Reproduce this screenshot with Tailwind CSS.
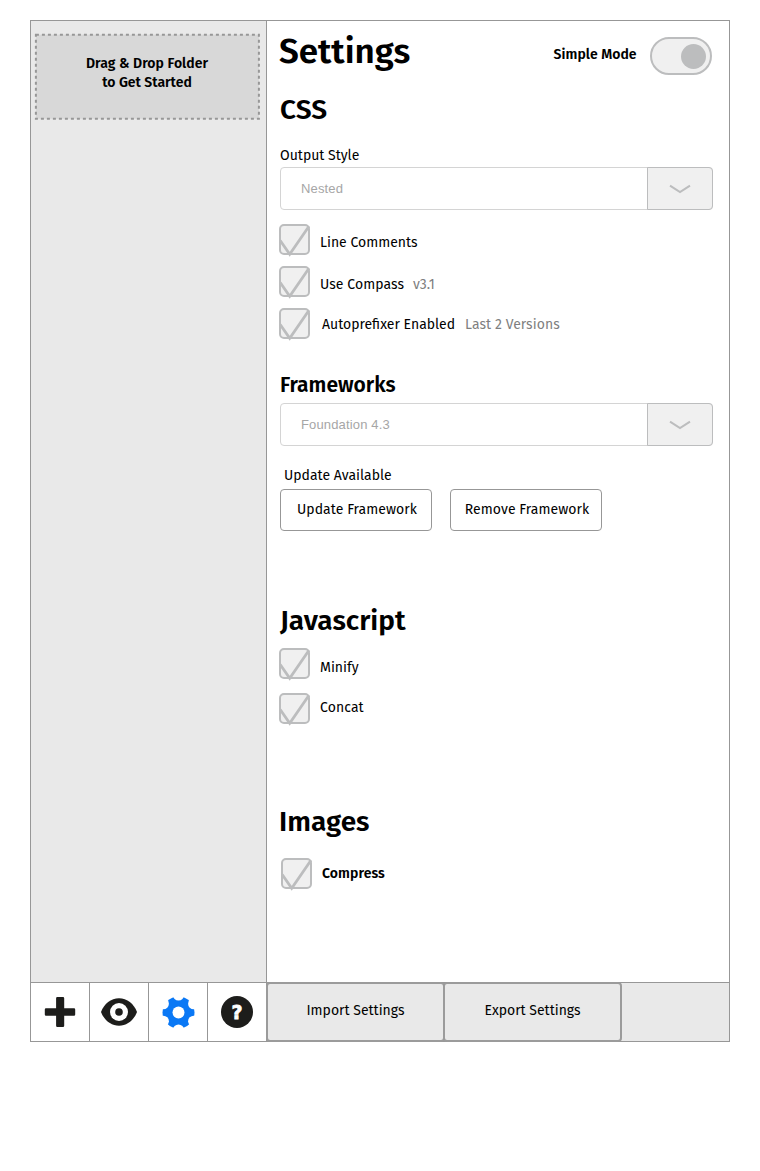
<!DOCTYPE html>
<html lang="en">
<head>
<meta charset="utf-8">
<title>Settings</title>
<script src="https://cdn.jsdelivr.net/npm/@tailwindcss/browser@4"></script>
</head>
<body class="bg-white text-black font-['Fira_Sans','Noto_Sans',sans-serif] text-[14px] leading-5">
<svg class="hidden">
  <symbol id="check" viewBox="0 0 32 33"><rect x="1" y="1" width="29" height="29" rx="4" fill="#f0f0f0" stroke="#bcbdbe" stroke-width="2"/><path d="M1.2 16.5 10.7 30.2 30 2.2" fill="none" stroke="#bcbdbe" stroke-width="2.8"/></symbol>
  <symbol id="chev" viewBox="0 0 22 10"><path d="M1 1.7 11 8.1 21 1.7" fill="none" stroke="#bcbdbe" stroke-width="2"/></symbol>
</svg>
<div class="ml-[30px] mt-5 w-[700px] h-[1022px] border border-[#979797] flex flex-col whitespace-nowrap">
  <div class="flex h-[961px]">
    <aside class="w-[236px] shrink-0 bg-[#e9e9e9] border-r border-[#979797] pt-3 pl-[3px]">
      <div class="grid w-[226px] h-[87px]">
        <svg class="col-start-1 row-start-1" width="226" height="87"><rect x="1.9" y="1.7" width="223" height="84" fill="#d8d8d8" stroke="#979797" stroke-width="2" stroke-dasharray="3 3"/></svg>
        <div class="col-start-1 row-start-1 pt-[21px] text-center font-semibold leading-[19px]"><span class="tracking-[0.06px]">Drag &amp; Drop Folder</span><br>to Get Started</div>
      </div>
    </aside>
    <main class="flex-1 pl-[13px]">
      <header class="flex h-[71px] items-start">
        <h1 class="-ml-px w-[274px] mt-[10px] text-[35px] leading-10 font-semibold">Settings</h1>
        <span class="w-[97px] mt-6 pl-[0.5px] font-semibold tracking-[0.05px]">Simple Mode</span>
        <div class="mt-4 w-[62px] h-[38px] rounded-full border-2 border-[#bcbdbe] bg-[#f0f0f0] flex items-center justify-end pr-1"><div class="size-[25px] rounded-full bg-[#bcbdbe]"></div></div>
      </header>
      <h2 class="text-[28px] leading-9 font-semibold">CSS</h2>
      <div class="mt-[18px]">Output Style</div>
      <div class="mt-px flex w-[433px] h-[43px] rounded border border-[#d4d4d4]">
        <div class="flex-1 pl-5 leading-[41px] text-[13px] text-[#a6a6a6] font-['Liberation_Sans',Arial,sans-serif] tracking-[0.15px]">Nested</div>
        <div class="-my-px -mr-px w-[66px] rounded-r border border-[#bcbdbe] bg-[#f0f0f0] flex items-center justify-center"><svg width="22" height="10"><use href="#chev"/></svg></div>
      </div>
      <div class="mt-[14px] -ml-px flex h-[42px]"><svg class="w-8 h-[33px] mr-[9px]"><use href="#check"/></svg><span class="mt-[9px]">Line Comments</span></div>
      <div class="-ml-px flex h-[42px]"><svg class="w-8 h-[33px] mr-[9px]"><use href="#check"/></svg><span class="mt-[9px] w-[93px] tracking-[0.06px]">Use Compass</span><span class="mt-[9px] text-[#7f7f7f]">v3.1</span></div>
      <div class="-ml-px flex h-[42px]"><svg class="w-8 h-[33px] mr-[11px]"><use href="#check"/></svg><span class="mt-[7px] w-[143px]">Autoprefixer Enabled</span><span class="mt-[7px] text-[#7f7f7f] tracking-[0.06px]">Last 2 Versions</span></div>
      <h3 class="mt-[21px] text-[21px] leading-7 font-semibold">Frameworks</h3>
      <div class="mt-1 flex w-[433px] h-[43px] rounded border border-[#d4d4d4]">
        <div class="flex-1 pl-5 leading-[41px] text-[13px] text-[#a6a6a6] font-['Liberation_Sans',Arial,sans-serif] tracking-[0.15px]">Foundation 4.3</div>
        <div class="-my-px -mr-px w-[66px] rounded-r border border-[#bcbdbe] bg-[#f0f0f0] flex items-center justify-center"><svg width="22" height="10"><use href="#chev"/></svg></div>
      </div>
      <div class="mt-5 pl-1">Update Available</div>
      <div class="mt-[3px] flex gap-[18px]">
        <div class="w-[152px] h-[42px] pl-[2px] rounded border border-[#979797] text-center leading-10 tracking-[0.06px]">Update Framework</div>
        <div class="w-[152px] h-[42px] pl-[2px] rounded border border-[#979797] text-center leading-10 tracking-[0.06px]">Remove Framework</div>
      </div>
      <h2 class="mt-[72px] text-[28px] leading-9 font-semibold">Javascript</h2>
      <div class="mt-[9px] -ml-px flex h-[45px]"><svg class="w-8 h-[33px] mr-[9px]"><use href="#check"/></svg><span class="mt-[10px]">Minify</span></div>
      <div class="-ml-px flex h-[45px]"><svg class="w-8 h-[33px] mr-[9px]"><use href="#check"/></svg><span class="mt-[5px] tracking-[0.1px]">Concat</span></div>
      <h2 class="-ml-px mt-[66px] text-[28px] leading-9 font-semibold">Images</h2>
      <div class="mt-[18px] ml-px flex h-[42px]"><svg class="w-8 h-[33px] mr-[9px]"><use href="#check"/></svg><span class="mt-1.5 font-semibold tracking-[0.08px]">Compress</span></div>
    </main>
  </div>
  <footer class="flex h-[59px] border-t border-[#979797]">
    <div class="w-[59px] border-r border-[#979797] flex items-center justify-center"><svg width="32" height="32"><path d="M13.300 1h5.700q1.200 0 1.200 1.200V12.200h9.800q1.200 0 1.200 1.200V18.600q0 1.200-1.200 1.200H20.200v10q0 1.200-1.200 1.200H13.300q-1.200 0-1.200-1.200v-10H2q-1.200 0-1.200-1.200V13.400q0-1.200 1.200-1.200H12.100v-10q0-1.200 1.200-1.200Z" fill="#1d1d1b"/></svg></div>
    <div class="w-[59px] border-r border-[#979797] flex items-center justify-center"><svg width="36" height="28"><path d="M0 14C3 6 10 .3 18 .3S33 6 36 14C33 22 26 27.700 18 27.700S3 22 0 14Z" fill="#1d1d1b"/><circle cx="18" cy="14" r="9" fill="#fff"/><circle cx="18" cy="14" r="3.8" fill="#1d1d1b"/></svg></div>
    <div class="w-[59px] border-r border-[#979797] flex items-center justify-center"><svg width="34" height="34" viewBox="-17.5 -17.5 34 34"><circle r="16" fill="#0a78f5"/><g fill="#fff"><circle r="6"/><circle cy="-17.500" r="5.6"/><circle cy="17.500" r="5.6"/><circle cx="15.200" cy="-8.750" r="5.6"/><circle cx="15.200" cy="8.750" r="5.6"/><circle cx="-15.200" cy="-8.750" r="5.6"/><circle cx="-15.200" cy="8.750" r="5.6"/></g></svg></div>
    <div class="w-[59px] border-r border-[#979797] flex items-center justify-center"><div class="size-8 rounded-full bg-[#1d1d1b] text-white text-center font-bold text-[19px] leading-8 font-['DejaVu_Sans',sans-serif] [-webkit-text-stroke:0.8px_white]">?</div></div>
    <div class="flex flex-1 bg-[#e9e9e9]">
      <div class="-mt-px -ml-px h-[60px] w-[179px] rounded border-2 border-[#9b9b9b] text-center leading-[53px]">Import Settings</div>
      <div class="-mt-px -ml-[2px] h-[60px] w-[179px] rounded border-2 border-[#9b9b9b] text-center leading-[53px]">Export Settings</div>
    </div>
  </footer>
</div>
</body>
</html>
